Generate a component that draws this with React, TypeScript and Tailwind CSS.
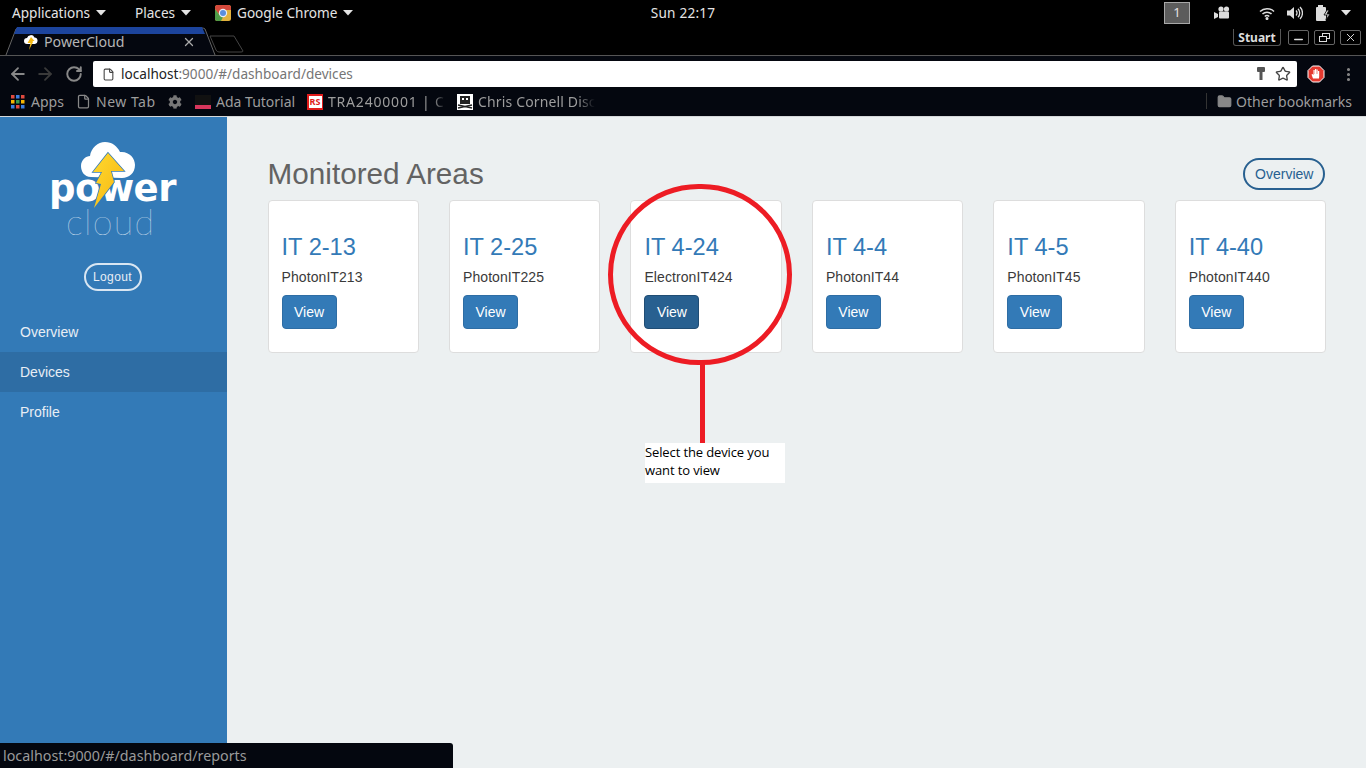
import React from "react";
import { ArrowLeft, ArrowRight, RotateCw, Star, X, File, Folder, EllipsisVertical, Minus } from "lucide-react";
import { FaCog } from "react-icons/fa";

const ui = { fontFamily: '"Noto Sans", sans-serif' };

function Caret() {
  return <svg width="10" height="6" viewBox="0 0 10 6" className="ml-[6px] mt-[1px]"><path d="M0 0h10L5 5.5z" fill="#e4e4e4" /></svg>;
}

function ChromeLogo({ size = 16 }: { size?: number }) {
  return (
    <svg width={size} height={size} viewBox="0 0 16 16">
      <rect width="16" height="16" rx="2.5" fill="#e2b23c" />
      <path d="M2.500 0H13.500A2.500 2.500 0 0 1 16 2.500V5H8L3.500 8.500L0 4V2.500A2.500 2.500 0 0 1 2.500 0z" fill="#d4493c" />
      <path d="M0 4L5 10.500L8 12L6 16H2.500A2.500 2.500 0 0 1 0 13.500z" fill="#4f9c48" />
      <circle cx="8" cy="8" r="4.200" fill="#e8eef6" />
      <circle cx="8" cy="8" r="3" fill="#5a8edc" />
    </svg>
  );
}

function TopBar() {
  return (
    <div className="h-[27px] bg-black flex items-center text-[13.6px] text-[#e4e4e4] pb-[1px]" style={ui}>
      <div className="flex-1 flex items-center">
        <div className="flex items-center ml-[12px] w-[123px]">Applications<Caret /></div>
        <div className="flex items-center w-[80px]">Places<Caret /></div>
        <div className="flex items-center"><ChromeLogo /><span className="ml-[6px]">Google Chrome</span><Caret /></div>
      </div>
      <span className="tracking-[0.2px]">Sun 22:17</span>
      <div className="flex-1 flex items-center justify-end">
        <div className="w-[26px] h-[22px] bg-[#5c5c5c] border border-[#a8a8a8] flex items-center justify-center text-[13px] mr-[24px]">1</div>
        <svg width="18" height="14" viewBox="0 0 18 14" className="mr-[27px]"><circle cx="7" cy="3" r="2.600" fill="#ddd" /><circle cx="12.500" cy="3" r="2.600" fill="#ddd" /><rect x="5" y="5.500" width="10" height="7" rx="1" fill="#ddd" /><path d="M0 6l4 2v3l-4 2z" fill="#ddd" /></svg>
        <svg width="16" height="13" viewBox="0 0 16 13" className="mr-[12px]" fill="none" stroke="#ddd" strokeWidth="1.500"><path d="M1 4.500a10 10 0 0 1 14 0" /><path d="M3.500 7a6.500 6.500 0 0 1 9 0" /><path d="M5.800 9.400a3 3 0 0 1 4.400 0" /><circle cx="8" cy="11.500" r="0.800" fill="#ddd" /></svg>
        <svg width="16" height="14" viewBox="0 0 16 14" className="mr-[12px]" fill="none" stroke="#ddd" strokeWidth="1.300"><path d="M0 4.500h3L7 1v12L3 9.500H0z" fill="#ddd" stroke="none" /><path d="M9 4.500a3.500 3.500 0 0 1 0 5" /><path d="M11 2.800a6 6 0 0 1 0 8.400" /><path d="M13 1a8.500 8.500 0 0 1 0 12" /></svg>
        <svg width="16" height="16" viewBox="0 0 16 16" className="mr-[10px]"><rect x="3" y="0" width="5" height="2" fill="#ddd" /><rect x="1" y="2" width="10" height="14" rx="1" fill="#ddd" /><path d="M12 5l-3 5h3l-1 5 4-6h-3l2-4z" fill="#ddd" stroke="#000" strokeWidth="0.800" /></svg>
        <svg width="10" height="6" viewBox="0 0 10 6" className="mr-[15px]"><path d="M0 0h10L5 5.500z" fill="#e4e4e4" /></svg>
      </div>
    </div>
  );
}

function Favicon() {
  return (
    <svg width="14" height="16" viewBox="0 0 14 16">
      <path d="M3 9a3 3 0 0 1 0-6 4 4 0 0 1 7.500-0.500A3.300 3.300 0 0 1 11 9z" fill="#fff" />
      <path d="M7 2l3.500 4H8.500L9 7 5 15l1.500-7H3.500z" fill="#f5b914" />
    </svg>
  );
}

function TabRow() {
  return (
    <div className="h-[29px] bg-black border-b border-[#555] relative" style={ui}>
      <div className="absolute left-[5px] bottom-0 h-[28px] w-[206px]">
        <svg width="211" height="28" viewBox="0 0 211 28" className="absolute inset-0">
          <path d="M1 28L11 2Q12 1 14 1H197Q199 1 200 2L210 28" fill="#04070f" stroke="#666" />
          <path d="M9 7L12 0H197L200 7z" fill="#1c449c" />
        </svg>
        <div className="absolute left-[19px] top-[8px]"><Favicon /></div>
        <span className="absolute left-[39px] top-[4px] text-[14.2px] text-[#b5b5b5]">PowerCloud</span>
        <X size={14} strokeWidth={2.200} className="absolute left-[177px] top-[8px] text-[#aaa]" />
      </div>
      <svg width="36" height="18" viewBox="0 0 36 18" className="absolute left-[208px] bottom-[2px]"><path d="M2 1H26L35 16Q35 17 33 17H11Q9 17 8 15z" fill="none" stroke="#444" /></svg>
      <div className="absolute right-[5px] bottom-[9px] flex items-center gap-[5px]">
        <div className="w-[48px] h-[17px] border border-[#555] rounded-b-[3px] border-t-0 text-[12px] font-bold text-[#ddd] flex items-center justify-center mr-[2px] pt-[1px]">Stuart</div>
        <div className="w-[21px] h-[15px] border border-[#666] rounded-[2px] flex items-center justify-center"><Minus size={13} strokeWidth={2.500} className="text-[#ddd] mt-[3px]" /></div>
        <div className="w-[21px] h-[15px] border border-[#666] rounded-[2px] flex items-center justify-center"><svg width="11" height="9" viewBox="0 0 11 9" fill="none" stroke="#ddd"><rect x="3.500" y="0.500" width="7" height="5" /><rect x="0.500" y="3.500" width="7" height="5" fill="#000" /></svg></div>
        <div className="w-[21px] h-[15px] border border-[#666] rounded-[2px] flex items-center justify-center"><X size={13} strokeWidth={1.800} className="text-[#ddd]" /></div>
      </div>
    </div>
  );
}

function Toolbar() {
  return (
    <div className="h-[31px] bg-[#04070f] flex items-center pt-[5px]" style={ui}>
      <ArrowLeft size={20} className="ml-[8px] text-[#888]" strokeWidth={2.200} />
      <ArrowRight size={20} className="ml-[7px] text-[#3a3a3a]" strokeWidth={2.200} />
      <RotateCw size={18} className="ml-[10px] text-[#888]" strokeWidth={2.600} />
      <div className="ml-[10px] w-[1204px] h-[26px] bg-white rounded-[2px] flex items-center text-[13.6px] relative">
        <File size={13} className="ml-[9px] text-[#444]" />
        <span className="ml-[6px] text-[#222]">localhost<span className="text-[#757575]">:9000/#/dashboard/devices</span></span>
        <svg width="10" height="14" viewBox="0 0 10 14" className="absolute left-[1163px] top-[6px]"><rect x="1" y="0" width="8" height="5" rx="1" fill="#555" /><rect x="3.500" y="5" width="3" height="8" fill="#555" /></svg>
        <Star size={16} className="absolute right-[6px] top-[5px] text-[#444]" strokeWidth={2} />
      </div>
      <svg width="18" height="18" viewBox="0 0 18 18" className="ml-[10px]"><path d="M5.500 1h7L17 5.500v7L12.500 17h-7L1 12.500v-7z" fill="#e53a30" stroke="#fff" strokeWidth="1" /><path d="M6 13.500L4.500 9.500l1 -0.500L6.500 10V5h1.200V9h.3V4h1.200V9h.3V4.500h1.200V9h.3V6h1.200v5L12 13.500z" fill="#fff" /></svg>
      <EllipsisVertical size={17} className="ml-[15px] text-[#888]" strokeWidth={2.400} />
    </div>
  );
}

function Bookmarks() {
  return (
    <div className="h-[29px] bg-[#04070f] flex items-center text-[14px] text-[#9d9d9d] relative border-b border-[#d5d8da] box-content" style={ui}>
      <svg width="14" height="14" viewBox="0 0 14 14" className="ml-[11px]">
        {[0, 5, 10].map((y, r) => [0, 5, 10].map((x, c) => (
          <rect key={`${r}${c}`} x={x} y={y} width="3.500" height="3.500" fill={["#e04a3f", "#f5b400", "#3a7de0", "#3a9a4a"][(r + c * 2) % 4]} />
        )))}
      </svg>
      <span className="ml-[6px] w-[44px]">Apps</span>
      <File size={15} className="ml-[1px] text-[#888]" />
      <span className="ml-[5px] w-[60px] tracking-[0.5px] whitespace-nowrap">New Tab</span>
      <FaCog size={14} className="ml-[12px] text-[#777]" />
      <div className="ml-[13px] w-[16px] h-[14px] bg-[#111] relative"><div className="absolute bottom-0 inset-x-0 h-[4px] bg-[#d8365c]" /></div>
      <span className="ml-[5px] w-[84px] whitespace-nowrap">Ada Tutorial</span>
      <div className="ml-[7px] w-[16px] h-[16px] bg-[#e01b1b] flex items-center justify-center"><span className="bg-white text-[#e01b1b] text-[9px] font-bold leading-[12px] w-[13px] h-[12px] text-center">RS</span></div>
      <span className="ml-[5px] w-[125px] whitespace-nowrap overflow-hidden tracking-[0.8px]" style={{ maskImage: "linear-gradient(to right, black 84%, transparent 94%)" }}>TRA2400001 | C</span>
      <svg width="16" height="16" viewBox="0 0 16 16" className="ml-[4px]"><rect width="16" height="16" fill="#fff" /><rect x="3" y="2" width="10" height="8" fill="#222" /><rect x="5" y="4" width="2" height="2" fill="#fff" /><rect x="9" y="4" width="2" height="2" fill="#fff" /><path d="M1 11l14 3M15 11L1 14" stroke="#222" strokeWidth="1.500" /></svg>
      <span className="ml-[5px] w-[117px] overflow-hidden whitespace-nowrap tracking-[0.15px]" style={{ maskImage: "linear-gradient(to right, black 85%, transparent)" }}>Chris Cornell Disc</span>
      <div className="absolute right-[159px] top-[6px] w-px h-[16px] bg-[#333]" />
      <Folder size={15} fill="#888" className="absolute right-[134px] top-[7px] text-[#888]" />
      <span className="absolute right-[14px] top-[4px]">Other bookmarks</span>
    </div>
  );
}

function Logo() {
  return (
    <div className="relative h-[106px] w-[131px] mt-[22px]">
      <span className="absolute left-[1px] top-[29px] h-[36px] text-[37px] font-bold text-white tracking-[-0.5px] leading-[42px]" style={{ fontFamily: '"DejaVu Sans", sans-serif' }}>power</span>
      <span className="absolute left-[18px] top-[66px] h-[32px] text-[36px] text-[#e6eff7] tracking-[1.2px] leading-[32px]" style={{ fontFamily: '"Lato", sans-serif', fontWeight: 100 }}>cloud</span>
      <svg width="56" height="70" viewBox="81 141 56 70" className="absolute left-[33px] top-[2px]">
        <defs>
          <linearGradient id="bolt" x1="0" y1="0" x2="1" y2="1"><stop offset="0" stopColor="#ffd92e" /><stop offset="1" stopColor="#f5b512" /></linearGradient>
        </defs>
        <path d="M91 177C84 177 81 171 81 166C81 160 86 156 90 156C91 148 98 142 105 142C112 142 117 146 120 152C129 151 135 158 135 165C135 173 129 178 122 178z" fill="#fff" />
        <path d="M108 153L124 171H111L114 182L94 208L101 184L96 183L102 172H93z" fill="url(#bolt)" stroke="#337ab7" strokeWidth="1.500" paintOrder="stroke" />
      </svg>
    </div>
  );
}

function Sidebar() {
  return (
    <aside className="w-[227px] shrink-0 bg-[#337ab7] flex flex-col items-center text-[#e8eef5] text-[14px]">
      <Logo />
      <div className="mt-[18px] h-[28px] w-[58px] -ml-[2px] rounded-full border-2 border-[#d9e6f2] flex items-center justify-center text-[12px] tracking-[0.4px]">Logout</div>
      <nav className="mt-[21px] w-full">
        <div className="h-[40px] flex items-center pl-[20px]">Overview</div>
        <div className="h-[40px] flex items-center pl-[20px] bg-[#2e6da4]">Devices</div>
        <div className="h-[40px] flex items-center pl-[20px]">Profile</div>
      </nav>
    </aside>
  );
}

const areas = [
  ["IT 2-13", "PhotonIT213"],
  ["IT 2-25", "PhotonIT225"],
  ["IT 4-24", "ElectronIT424"],
  ["IT 4-4", "PhotonIT44"],
  ["IT 4-5", "PhotonIT45"],
  ["IT 4-40", "PhotonIT440"],
];

function Card({ title, sub, active }: { title: string; sub: string; active: boolean }) {
  return (
    <div className="h-[153px] bg-white border border-[#dddddd] rounded-[4px] px-[13px] pt-[32px]">
      <div className="text-[23.6px] leading-[28px] text-[#337ab7]">{title}</div>
      <div className="mt-[6px] text-[14px] leading-[20px] tracking-[0.08px] text-[#3a3a3a]">{sub}</div>
      <div className={`mt-[8px] w-[55px] h-[34px] rounded-[4px] border flex items-center justify-center text-[14px] text-white ${active ? "bg-[#286090] border-[#204d74]" : "bg-[#337ab7] border-[#2e6da4]"}`}>View</div>
    </div>
  );
}

function Main() {
  return (
    <main className="flex-1 bg-[#ecf0f1] pl-[40.55px] pr-[39.75px] relative">
      <div className="flex items-center justify-between h-[83px]">
        <h1 className="text-[29.7px] text-[#636363] leading-none mt-[30px]">Monitored Areas</h1>
        <div className="mt-[31px] mr-[1px] w-[82px] h-[32px] rounded-full border-2 border-[#286090] text-[#286090] text-[14px] flex items-center justify-center">Overview</div>
      </div>
      <div className="grid grid-cols-6 gap-[30px]">
        {areas.map(([t, s], i) => <Card key={t} title={t} sub={s} active={i === 2} />)}
      </div>
      <div className="absolute left-[381px] top-[67px] w-[184px] h-[181px] rounded-full border-[5px] border-[#ed1c24]" />
      <div className="absolute left-[473px] top-[246px] w-[5px] h-[81px] bg-[#ed1c24]" />
      <div className="absolute left-[418px] top-[326px] w-[140px] h-[40px] bg-white text-[13px] leading-[18px] text-black" style={{ fontFamily: '"Open Sans", sans-serif', letterSpacing: "-0.12px" }}>Select the device you<br />want to view</div>
    </main>
  );
}

export default function App() {
  return (
    <div className="w-[1366px] h-[768px] overflow-hidden flex flex-col relative" style={{ fontFamily: '"Liberation Sans", Arial, sans-serif' }}>
      <TopBar />
      <TabRow />
      <Toolbar />
      <Bookmarks />
      <div className="flex-1 flex min-h-0">
        <Sidebar />
        <Main />
      </div>
      <div className="absolute left-0 bottom-0 w-[453px] h-[25px] bg-[#04070f] rounded-tr-[3px] text-[14.3px] text-[#9a9a9a] pl-[3px] flex items-center" style={ui}>localhost:9000/#/dashboard/reports</div>
    </div>
  );
}
